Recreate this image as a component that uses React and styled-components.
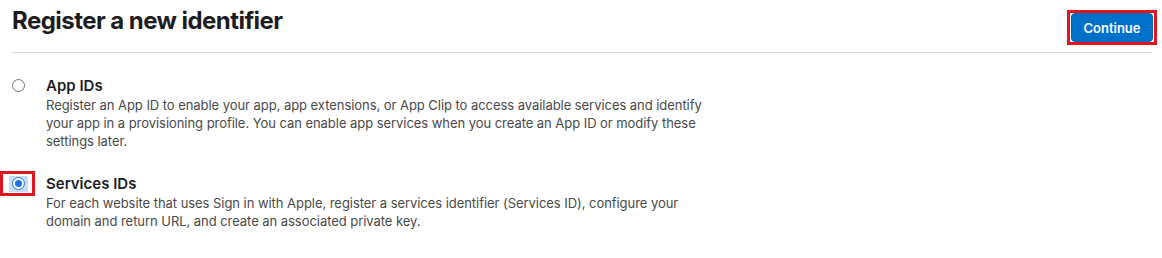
import styled, { createGlobalStyle } from "styled-components";

const GlobalStyle = createGlobalStyle`
  body {
    margin: 0;
    background: #fff;
    font-family: Inter, "Noto Sans", sans-serif;
    color: #1d1d1f;
  }
`;

const Header = styled.div`
  display: flex;
  align-items: flex-start;
  justify-content: space-between;
  box-sizing: border-box;
  height: 53px;
  margin: 0 10px 0 12px;
  padding-top: 6px;
  border-bottom: 1px solid #d6d6d6;
`;

const Title = styled.h1`
  margin: 0;
  font-size: 24px;
  line-height: 29px;
  font-weight: 700;
  letter-spacing: -0.55px;
  color: #1d1d1f;
`;

const Highlight = styled.div`
  display: flex;
  border: 3px solid #e0161f;
  padding: 0 1px;
  margin: 4px -5px 0 0;
`;

const Button = styled.button`
  box-sizing: border-box;
  width: 82px;
  height: 29px;
  background: #0070c9;
  color: #fff;
  border: 1px solid #0064b8;
  border-radius: 4px;
  font-family: inherit;
  font-size: 13px;
  font-weight: 600;
  padding: 0;
  cursor: pointer;
`;

const Options = styled.div`
  display: flex;
  flex-direction: column;
  gap: 24px;
  padding-top: 23px;
`;

const Option = styled.label`
  display: grid;
  grid-template-columns: 46px 1fr;
  align-items: start;
`;

const RadioCell = styled.span`
  box-sizing: border-box;
  width: 35px;
  height: 25px;
  margin-top: -3px;
  display: flex;
  align-items: center;
  justify-content: center;
  border: 3px solid ${(p) => (p.$focused ? "#e0161f" : "transparent")};
`;

const RadioRing = styled.span`
  display: flex;
  align-items: center;
  justify-content: center;
  width: 19px;
  height: 16px;
  margin-left: 1px;
  background: ${(p) => (p.$focused ? "#c4dffd" : "transparent")};
`;

const Radio = styled.span`
  box-sizing: border-box;
  width: 13px;
  height: 13px;
  border-radius: 50%;
  border: 1px solid ${(p) => (p.$checked ? "#1a73e8" : "#767676")};
  background: #fff;
  display: flex;
  align-items: center;
  justify-content: center;

  &::after {
    content: "";
    display: ${(p) => (p.$checked ? "block" : "none")};
    width: 7px;
    height: 7px;
    border-radius: 50%;
    background: #1a73e8;
  }
`;

const Text = styled.div`
  max-width: 668px;
`;

const OptionTitle = styled.div`
  font-size: 15px;
  font-weight: 600;
  line-height: 20px;
  color: #1d1d1f;
`;

const Description = styled.p`
  margin: 0;
  font-size: 13px;
  line-height: 18px;
  letter-spacing: -0.05px;
  color: #494949;
`;

const options = [
  {
    title: "App IDs",
    text: "Register an App ID to enable your app, app extensions, or App Clip to access available services and identify your app in a provisioning profile. You can enable app services when you create an App ID or modify these settings later.",
  },
  {
    title: "Services IDs",
    text: "For each website that uses Sign in with Apple, register a services identifier (Services ID), configure your domain and return URL, and create an associated private key.",
    checked: true,
  },
];

export default function App() {
  return (
    <>
      <GlobalStyle />
      <Header>
        <Title>Register a new identifier</Title>
        <Highlight>
          <Button>Continue</Button>
        </Highlight>
      </Header>
      <Options>
        {options.map((o) => (
          <Option key={o.title}>
            <RadioCell $focused={o.checked}>
              <RadioRing $focused={o.checked}>
                <Radio $checked={o.checked} />
              </RadioRing>
            </RadioCell>
            <Text>
              <OptionTitle>{o.title}</OptionTitle>
              <Description>{o.text}</Description>
            </Text>
          </Option>
        ))}
      </Options>
    </>
  );
}
